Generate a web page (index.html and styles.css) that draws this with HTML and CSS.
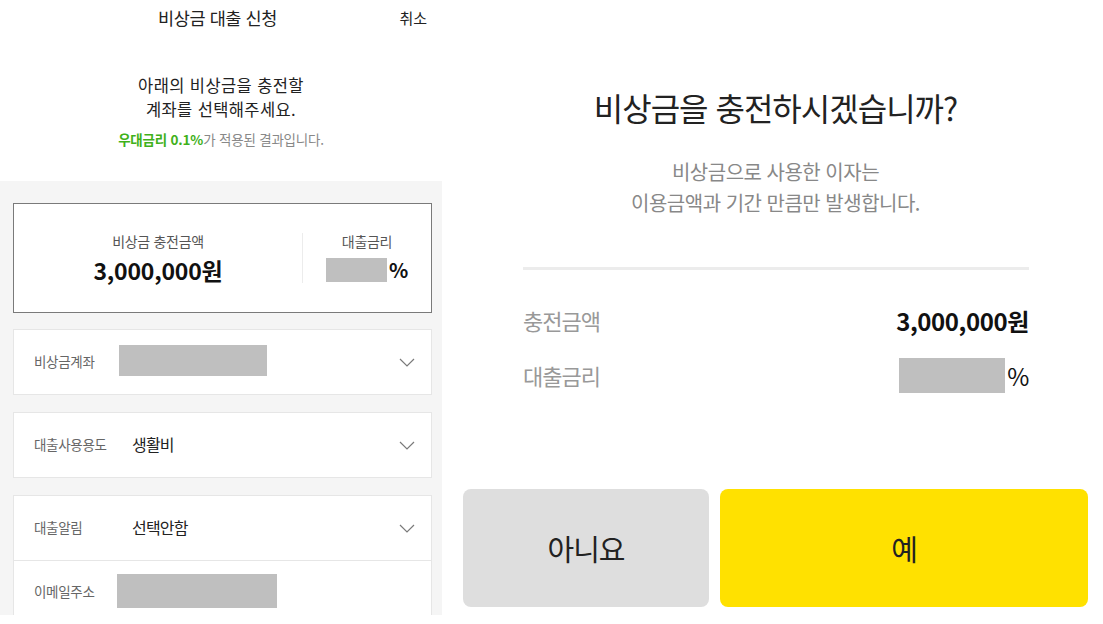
FILE: index.html
```html
<!DOCTYPE html>
<html lang="ko">
<head>
    <meta charset="UTF-8">
    <meta name="viewport" content="width=device-width, initial-scale=1.0">
    <title>비상금 대출 신청</title>
    <link rel="stylesheet" href="styles.css">
</head>
<body>

    <div class="screen">
        <section class="apply">
            <header class="apply-head">
                <span></span>
                <h1>비상금 대출 신청</h1>
                <a class="cancel">취소</a>
            </header>

            <div class="intro">
                <p class="intro-title">아래의 비상금을 충전할</p>
                <p class="intro-title">계좌를 선택해주세요.</p>
                <p class="intro-note"><strong>우대금리 0.1%</strong>가 적용된 결과입니다.</p>
            </div>

            <div class="form-area">
                <div class="summary">
                    <div class="summary-amount">
                        <span class="summary-label">비상금 충전금액</span>
                        <strong class="summary-value">3,000,000원</strong>
                    </div>
                    <div class="summary-rate">
                        <span class="summary-label">대출금리</span>
                        <strong class="summary-value"><i class="mask mask-rate"></i>%</strong>
                    </div>
                </div>

                <div class="field">
                    <div class="field-row">
                        <span class="field-label">비상금계좌</span>
                        <i class="mask mask-account"></i>
                        <svg class="chevron" width="16" height="9" viewBox="0 0 16 9"><polyline points="1,1 8,8 15,1" fill="none" stroke="#7a7a7a" stroke-width="1.2"/></svg>
                    </div>
                </div>

                <div class="field">
                    <div class="field-row">
                        <span class="field-label">대출사용용도</span>
                        <span class="field-value">생활비</span>
                        <svg class="chevron" width="16" height="9" viewBox="0 0 16 9"><polyline points="1,1 8,8 15,1" fill="none" stroke="#7a7a7a" stroke-width="1.2"/></svg>
                    </div>
                </div>

                <div class="field">
                    <div class="field-row">
                        <span class="field-label">대출알림</span>
                        <span class="field-value">선택안함</span>
                        <svg class="chevron" width="16" height="9" viewBox="0 0 16 9"><polyline points="1,1 8,8 15,1" fill="none" stroke="#7a7a7a" stroke-width="1.2"/></svg>
                    </div>
                    <div class="field-row">
                        <span class="field-label">이메일주소</span>
                        <i class="mask mask-email"></i>
                    </div>
                </div>
            </div>
        </section>

        <section class="confirm">
            <h2>비상금을 충전하시겠습니까?</h2>
            <p class="confirm-desc">비상금으로 사용한 이자는<br>이용금액과 기간 만큼만 발생합니다.</p>

            <div class="confirm-info">
                <div class="info-row">
                    <span class="info-label">충전금액</span>
                    <strong class="info-value">3,000,000원</strong>
                </div>
                <div class="info-row">
                    <span class="info-label">대출금리</span>
                    <span class="info-value info-rate"><i class="mask mask-big"></i>%</span>
                </div>
            </div>

            <div class="confirm-actions">
                <button class="btn-no">아니요</button>
                <button class="btn-yes">예</button>
            </div>
        </section>
    </div>

</body>
</html>
```

FILE: styles.css
```css
body {
    margin: 0;
    font-family: "Noto Sans CJK KR", "Noto Sans", sans-serif;
    background: #fff;
    color: #222;
}
.screen {
    display: flex;
    height: 624px;
    overflow: hidden;
}

/* 왼쪽: 신청 화면 */
.apply {
    width: 442px;
    flex-shrink: 0;
}
.apply-head {
    display: grid;
    grid-template-columns: 1fr auto 1fr;
    align-items: center;
    height: 34px;
    padding-right: 15px;
}
.apply-head h1 {
    margin: 0 0 0 8px;
    font-size: 17.5px;
    font-weight: 400;
    letter-spacing: -0.4px;
    color: #222;
}
.cancel {
    justify-self: end;
    font-size: 15px;
    color: #222;
}
.intro {
    text-align: center;
    margin-top: 39px;
}
.intro-title {
    margin: 0;
    font-size: 16.5px;
    line-height: 24px;
    letter-spacing: 0.4px;
    color: #222;
}
.intro-note {
    margin: 8px 0 0;
    font-size: 13.5px;
    line-height: 20px;
    letter-spacing: -0.2px;
    color: #888;
}
.intro-note strong {
    color: #3fb11a;
}
.form-area {
    margin-top: 32px;
    height: 434px;
    overflow: hidden;
    box-sizing: border-box;
    background: #f5f5f5;
    padding: 22px 10px 0 13px;
}
.summary {
    display: flex;
    align-items: center;
    height: 110px;
    box-sizing: border-box;
    border: 1px solid #7a7a7a;
    background: #fff;
}
.summary-amount,
.summary-rate {
    display: flex;
    flex-direction: column;
    align-items: center;
    justify-content: center;
    height: 50px;
}
.summary-amount {
    flex: 1;
}
.summary-rate {
    width: 128px;
    border-left: 1px solid #ececec;
}
.summary-label {
    font-size: 14px;
    line-height: 16px;
    letter-spacing: -0.3px;
    color: #555;
}
.summary-value {
    display: flex;
    align-items: center;
    margin-top: 8px;
    font-size: 23px;
    line-height: 26px;
    letter-spacing: -0.2px;
    color: #111;
}
.summary-rate .summary-value {
    font-size: 20px;
}
.mask {
    display: block;
    background: #bfbfbf;
}
.mask-rate {
    width: 61px;
    height: 24px;
    margin-right: 2px;
}
.field {
    margin-top: 16px;
    background: #fff;
    border: 1px solid #e6e6e6;
}
.field + .field {
    margin-top: 17px;
}
.field-row {
    display: flex;
    align-items: center;
    height: 64px;
    box-sizing: border-box;
    padding: 0 16px 3px 20px;
}
.field-row + .field-row {
    border-top: 1px solid #e6e6e6;
}
.field-label {
    width: 85px;
    font-size: 13.5px;
    letter-spacing: -0.3px;
    color: #666;
}
.field-value {
    margin-left: 13px;
    font-size: 16px;
    letter-spacing: -0.8px;
    color: #222;
}
.mask-account {
    width: 148px;
    height: 31px;
}
.mask-email {
    width: 160px;
    height: 34px;
    margin-left: -2px;
}
.chevron {
    margin-left: auto;
    margin-top: 3px;
}

/* 오른쪽: 확인 팝업 */
.confirm {
    flex: 1;
    padding: 0 15px 0 21px;
    text-align: center;
}
.confirm h2 {
    margin: 87px 0 0;
    font-size: 32px;
    line-height: 40px;
    font-weight: 400;
    letter-spacing: -1px;
    color: #222;
}
.confirm-desc {
    margin: 29px 0 0;
    font-size: 20px;
    line-height: 31px;
    letter-spacing: -0.5px;
    color: #888;
}
.confirm-info {
    margin: 49px 59px 0 60px;
    padding-top: 32px;
    border-top: 3px solid #ececec;
}
.info-row {
    display: flex;
    justify-content: space-between;
    align-items: center;
    height: 36px;
}
.info-row + .info-row {
    margin-top: 19px;
}
.info-label {
    font-size: 22px;
    letter-spacing: -1px;
    color: #999;
}
.info-value {
    font-size: 24px;
    letter-spacing: -0.4px;
    color: #111;
}
.info-rate {
    display: flex;
    align-items: center;
    font-weight: 400;
}
.mask-big {
    width: 106px;
    height: 35px;
    margin-right: 2px;
}
.confirm-actions {
    display: grid;
    grid-template-columns: 246px 368px;
    gap: 11px;
    margin-top: 96px;
}
.confirm-actions button {
    height: 118px;
    border: none;
    border-radius: 8px;
    font-family: inherit;
    font-size: 29px;
    letter-spacing: -1px;
    color: #222;
    cursor: pointer;
}
.btn-no {
    background: #dedede;
}
.btn-yes {
    background: #ffe100;
}
```
